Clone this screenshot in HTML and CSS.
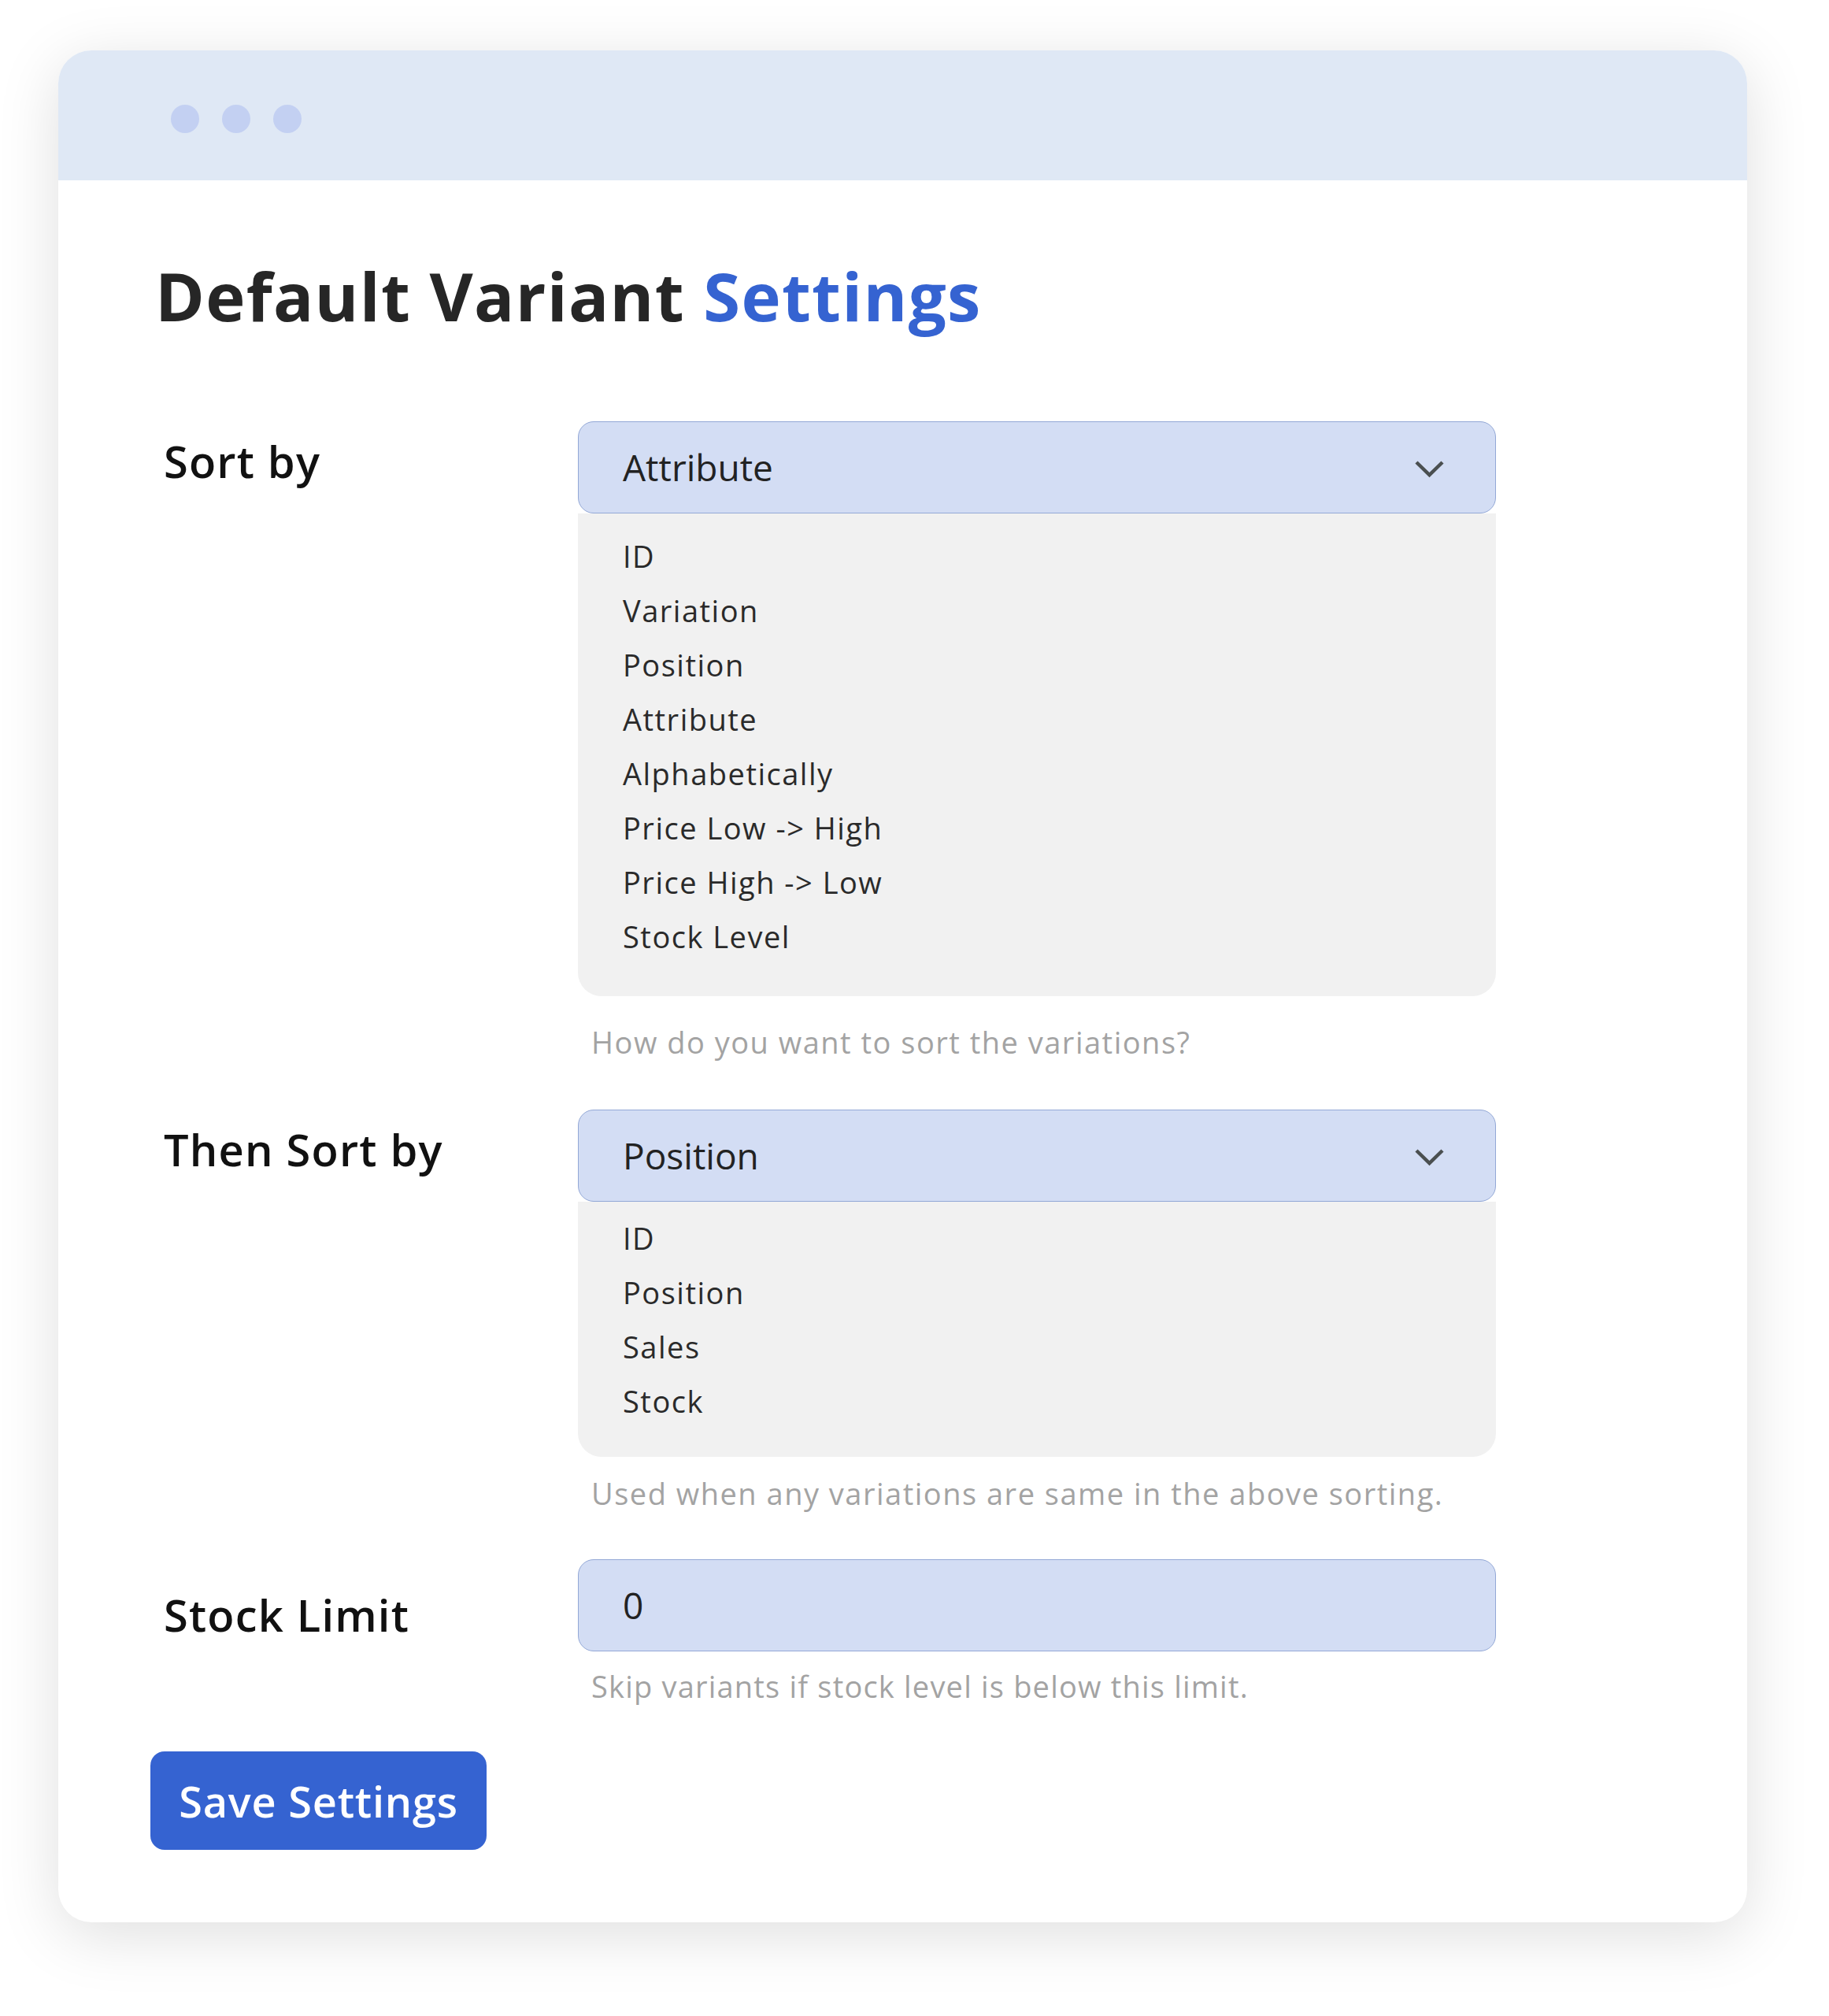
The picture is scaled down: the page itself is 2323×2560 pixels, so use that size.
FILE: index.html
```html
<!DOCTYPE html>
<html lang="en">
<head>
<meta charset="utf-8">
<title>Default Variant Settings</title>
<link rel="stylesheet" href="styles.css">
</head>
<body>
<div class="card">
  <div class="titlebar">
    <span class="dot"></span><span class="dot"></span><span class="dot"></span>
  </div>
  <div class="body">
    <h1 class="title">Default Variant <span class="accent">Settings</span></h1>

    <div class="row">
      <div class="label">Sort by</div>
      <div class="control">
        <div class="select">
          <span class="select-value">Attribute</span>
          <svg class="chevron" width="37" height="22" viewBox="0 0 37 22"><polyline points="2,2 18.5,18 35,2" fill="none" stroke="#4a4f50" stroke-width="4.5"/></svg>
        </div>
        <ul class="options options-first">
          <li>ID</li>
          <li>Variation</li>
          <li>Position</li>
          <li>Attribute</li>
          <li>Alphabetically</li>
          <li>Price Low -&gt; High</li>
          <li>Price High -&gt; Low</li>
          <li>Stock Level</li>
        </ul>
        <p class="hint hint-first">How do you want to sort the variations?</p>
      </div>
    </div>

    <div class="row row-second">
      <div class="label">Then Sort by</div>
      <div class="control">
        <div class="select">
          <span class="select-value">Position</span>
          <svg class="chevron" width="37" height="22" viewBox="0 0 37 22"><polyline points="2,2 18.5,18 35,2" fill="none" stroke="#4a4f50" stroke-width="4.5"/></svg>
        </div>
        <ul class="options options-second">
          <li>ID</li>
          <li>Position</li>
          <li>Sales</li>
          <li>Stock</li>
        </ul>
        <p class="hint hint-second">Used when any variations are same in the above sorting.</p>
      </div>
    </div>

    <div class="row row-third">
      <div class="label label-low">Stock Limit</div>
      <div class="control">
        <div class="input">0</div>
        <p class="hint hint-third">Skip variants if stock level is below this limit.</p>
      </div>
    </div>

    <button class="save">Save Settings</button>
  </div>
</div>
</body>
</html>
```

FILE: styles.css
```css
* { box-sizing: border-box; }

body {
  margin: 0;
  background: #ffffff;
  font-family: "Open Sans", "Noto Sans", sans-serif;
  width: 2323px;
  height: 2560px;
}

.card {
  margin: 64px 0 0 74px;
  width: 2145px;
  height: 2377px;
  background: #ffffff;
  border-radius: 42px;
  overflow: hidden;
  box-shadow: 0 16px 80px rgba(0, 0, 0, 0.13);
}

.titlebar {
  height: 165px;
  background: #dfe8f5;
  display: flex;
  align-items: flex-start;
  gap: 29px;
  padding: 69px 0 0 143px;
}

.dot {
  width: 36px;
  height: 36px;
  border-radius: 50%;
  background: #c3d0f2;
}

.body {
  padding: 96px 0 0 117px;
}

.title {
  margin: 0 0 110px 6px;
  font-size: 85px;
  line-height: 100px;
  font-weight: 700;
  color: #262626;
  letter-spacing: 1.3px;
}

.accent { color: #3563d1; }

.row {
  display: grid;
  grid-template-columns: 543px 1166px;
}

.row-second { margin-top: 61px; }
.row-third { margin-top: 59px; }

.label {
  padding-left: 17px;
  font-size: 56px;
  line-height: 100px;
  font-weight: 600;
  letter-spacing: 1.2px;
  color: #111111;
}

.label-low { padding-top: 20px; }

.select, .input {
  position: relative;
  height: 117px;
  border: 1.5px solid #93a8d6;
  border-radius: 20px;
  background: #d3ddf4;
  padding-left: 56px;
  font-size: 46px;
  line-height: 114px;
  color: #222222;
}

.chevron {
  position: absolute;
  right: 65px;
  top: 49px;
}

.options {
  list-style: none;
  margin: 0;
  background: #f1f1f1;
  border-radius: 0 0 30px 30px;
  padding: 20px 0 41px 57px;
  font-size: 38px;
  line-height: 69px;
  letter-spacing: 1.5px;
  color: #2a2a2a;
}

.options-second { padding: 12px 0 36px 57px; }

.hint {
  margin: 33px 0 0 0;
  padding-left: 17px;
  font-size: 38px;
  line-height: 50px;
  letter-spacing: 1.5px;
  color: #a3a3a3;
}

.hint-second { margin-top: 21px; }
.hint-third { margin-top: 19px; letter-spacing: 1.2px; }

.save {
  margin-top: 58px;
  width: 427px;
  height: 125px;
  border: none;
  border-radius: 18px;
  background: #3563d1;
  color: #ffffff;
  font-family: "Open Sans", "Noto Sans", sans-serif;
  font-size: 54px;
  font-weight: 600;
  letter-spacing: 0.8px;
  padding: 0;
}
```
